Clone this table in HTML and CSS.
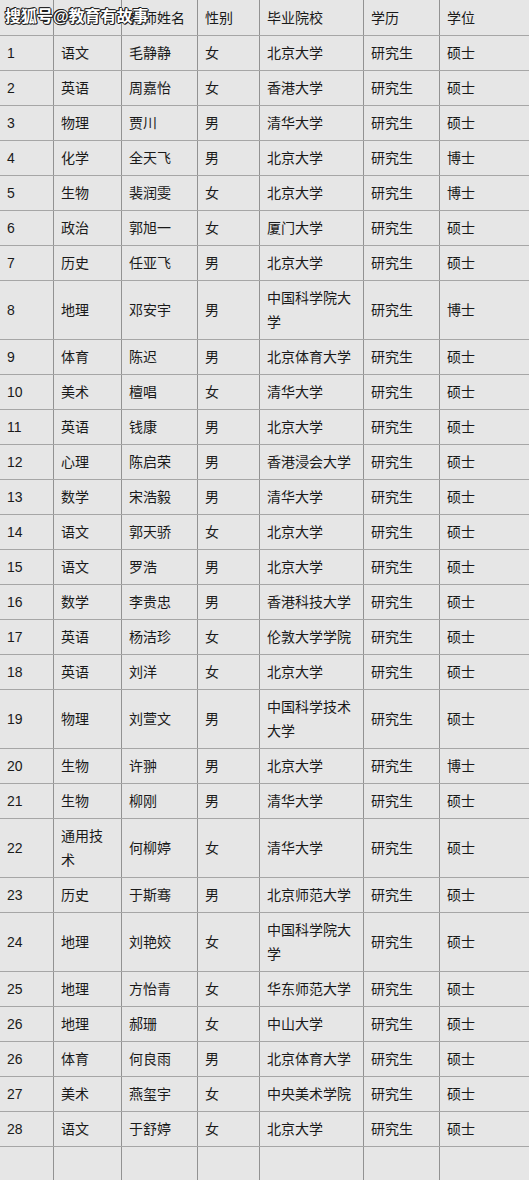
FILE: index.html
```html
<!DOCTYPE html>
<html lang="zh-CN">
<head>
<meta charset="utf-8">
<title>教师名单</title>
<link rel="stylesheet" href="styles.css">
</head>
<body>
<div class="sheet">
  <div class="watermark">搜狐号@教育有故事</div>
  <div class="row head"><div class="c"></div><div class="c"></div><div class="c">教师姓名</div><div class="c">性别</div><div class="c">毕业院校</div><div class="c">学历</div><div class="c">学位</div></div>
  <div class="row"><div class="c">1</div><div class="c">语文</div><div class="c">毛静静</div><div class="c">女</div><div class="c">北京大学</div><div class="c">研究生</div><div class="c">硕士</div></div>
  <div class="row"><div class="c">2</div><div class="c">英语</div><div class="c">周嘉怡</div><div class="c">女</div><div class="c">香港大学</div><div class="c">研究生</div><div class="c">硕士</div></div>
  <div class="row"><div class="c">3</div><div class="c">物理</div><div class="c">贾川</div><div class="c">男</div><div class="c">清华大学</div><div class="c">研究生</div><div class="c">硕士</div></div>
  <div class="row"><div class="c">4</div><div class="c">化学</div><div class="c">全天飞</div><div class="c">男</div><div class="c">北京大学</div><div class="c">研究生</div><div class="c">博士</div></div>
  <div class="row"><div class="c">5</div><div class="c">生物</div><div class="c">裴润雯</div><div class="c">女</div><div class="c">北京大学</div><div class="c">研究生</div><div class="c">博士</div></div>
  <div class="row"><div class="c">6</div><div class="c">政治</div><div class="c">郭旭一</div><div class="c">女</div><div class="c">厦门大学</div><div class="c">研究生</div><div class="c">硕士</div></div>
  <div class="row"><div class="c">7</div><div class="c">历史</div><div class="c">任亚飞</div><div class="c">男</div><div class="c">北京大学</div><div class="c">研究生</div><div class="c">硕士</div></div>
  <div class="row"><div class="c">8</div><div class="c">地理</div><div class="c">邓安宇</div><div class="c">男</div><div class="c">中国科学院大学</div><div class="c">研究生</div><div class="c">博士</div></div>
  <div class="row"><div class="c">9</div><div class="c">体育</div><div class="c">陈迟</div><div class="c">男</div><div class="c">北京体育大学</div><div class="c">研究生</div><div class="c">硕士</div></div>
  <div class="row"><div class="c">10</div><div class="c">美术</div><div class="c">檀唱</div><div class="c">女</div><div class="c">清华大学</div><div class="c">研究生</div><div class="c">硕士</div></div>
  <div class="row"><div class="c">11</div><div class="c">英语</div><div class="c">钱康</div><div class="c">男</div><div class="c">北京大学</div><div class="c">研究生</div><div class="c">硕士</div></div>
  <div class="row"><div class="c">12</div><div class="c">心理</div><div class="c">陈启荣</div><div class="c">男</div><div class="c">香港浸会大学</div><div class="c">研究生</div><div class="c">硕士</div></div>
  <div class="row"><div class="c">13</div><div class="c">数学</div><div class="c">宋浩毅</div><div class="c">男</div><div class="c">清华大学</div><div class="c">研究生</div><div class="c">硕士</div></div>
  <div class="row"><div class="c">14</div><div class="c">语文</div><div class="c">郭天骄</div><div class="c">女</div><div class="c">北京大学</div><div class="c">研究生</div><div class="c">硕士</div></div>
  <div class="row"><div class="c">15</div><div class="c">语文</div><div class="c">罗浩</div><div class="c">男</div><div class="c">北京大学</div><div class="c">研究生</div><div class="c">硕士</div></div>
  <div class="row"><div class="c">16</div><div class="c">数学</div><div class="c">李贵忠</div><div class="c">男</div><div class="c">香港科技大学</div><div class="c">研究生</div><div class="c">硕士</div></div>
  <div class="row"><div class="c">17</div><div class="c">英语</div><div class="c">杨洁珍</div><div class="c">女</div><div class="c">伦敦大学学院</div><div class="c">研究生</div><div class="c">硕士</div></div>
  <div class="row"><div class="c">18</div><div class="c">英语</div><div class="c">刘洋</div><div class="c">女</div><div class="c">北京大学</div><div class="c">研究生</div><div class="c">硕士</div></div>
  <div class="row"><div class="c">19</div><div class="c">物理</div><div class="c">刘萱文</div><div class="c">男</div><div class="c">中国科学技术大学</div><div class="c">研究生</div><div class="c">硕士</div></div>
  <div class="row"><div class="c">20</div><div class="c">生物</div><div class="c">许翀</div><div class="c">男</div><div class="c">北京大学</div><div class="c">研究生</div><div class="c">博士</div></div>
  <div class="row"><div class="c">21</div><div class="c">生物</div><div class="c">柳刚</div><div class="c">男</div><div class="c">清华大学</div><div class="c">研究生</div><div class="c">硕士</div></div>
  <div class="row"><div class="c">22</div><div class="c">通用技术</div><div class="c">何柳婷</div><div class="c">女</div><div class="c">清华大学</div><div class="c">研究生</div><div class="c">硕士</div></div>
  <div class="row"><div class="c">23</div><div class="c">历史</div><div class="c">于斯骞</div><div class="c">男</div><div class="c">北京师范大学</div><div class="c">研究生</div><div class="c">硕士</div></div>
  <div class="row"><div class="c">24</div><div class="c">地理</div><div class="c">刘艳姣</div><div class="c">女</div><div class="c">中国科学院大学</div><div class="c">研究生</div><div class="c">硕士</div></div>
  <div class="row"><div class="c">25</div><div class="c">地理</div><div class="c">方怡青</div><div class="c">女</div><div class="c">华东师范大学</div><div class="c">研究生</div><div class="c">硕士</div></div>
  <div class="row"><div class="c">26</div><div class="c">地理</div><div class="c">郝珊</div><div class="c">女</div><div class="c">中山大学</div><div class="c">研究生</div><div class="c">硕士</div></div>
  <div class="row"><div class="c">26</div><div class="c">体育</div><div class="c">何良雨</div><div class="c">男</div><div class="c">北京体育大学</div><div class="c">研究生</div><div class="c">硕士</div></div>
  <div class="row"><div class="c">27</div><div class="c">美术</div><div class="c">燕玺宇</div><div class="c">女</div><div class="c">中央美术学院</div><div class="c">研究生</div><div class="c">硕士</div></div>
  <div class="row"><div class="c">28</div><div class="c">语文</div><div class="c">于舒婷</div><div class="c">女</div><div class="c">北京大学</div><div class="c">研究生</div><div class="c">硕士</div></div>
  <div class="row empty"><div class="c"></div><div class="c"></div><div class="c"></div><div class="c"></div><div class="c"></div><div class="c"></div><div class="c"></div></div>
</div>
</body>
</html>
```

FILE: styles.css
```css
html, body {
  margin: 0;
  padding: 0;
  background: #e6e6e6;
}
body {
  width: 529px;
  height: 1180px;
  overflow: hidden;
  font-family: "Liberation Sans", "Noto Sans CJK SC", sans-serif;
  font-size: 14px;
  color: #1a1a1a;
}
.sheet {
  position: relative;
  width: 529px;
}
.row {
  display: grid;
  grid-template-columns: 54px 68px 76px 62px 104px 76px 89px;
  border-bottom: 1px solid #a6a6a6;
}
.c {
  display: flex;
  align-items: center;
  box-sizing: border-box;
  min-height: 34px;
  padding: 5px 6px 5px 7px;
  line-height: 24px;
  border-right: 1px solid #929292;
  word-break: break-all;
}
.c:last-child {
  border-right: none;
}
.head .c {
  min-height: 35px;
}
.empty {
  border-bottom: none;
}
.empty .c {
  min-height: 40px;
}
.watermark {
  position: absolute;
  left: 5px;
  top: 6px;
  font-size: 16px;
  font-weight: bold;
  line-height: 22px;
  letter-spacing: 0;
  color: #ffffff;
  text-shadow: 1px 0 0 #222, -1px 0 0 #222, 0 1px 0 #222, 0 -1px 0 #222, 1px 1px 0 #222, -1px -1px 0 #222;
  z-index: 2;
}
```
